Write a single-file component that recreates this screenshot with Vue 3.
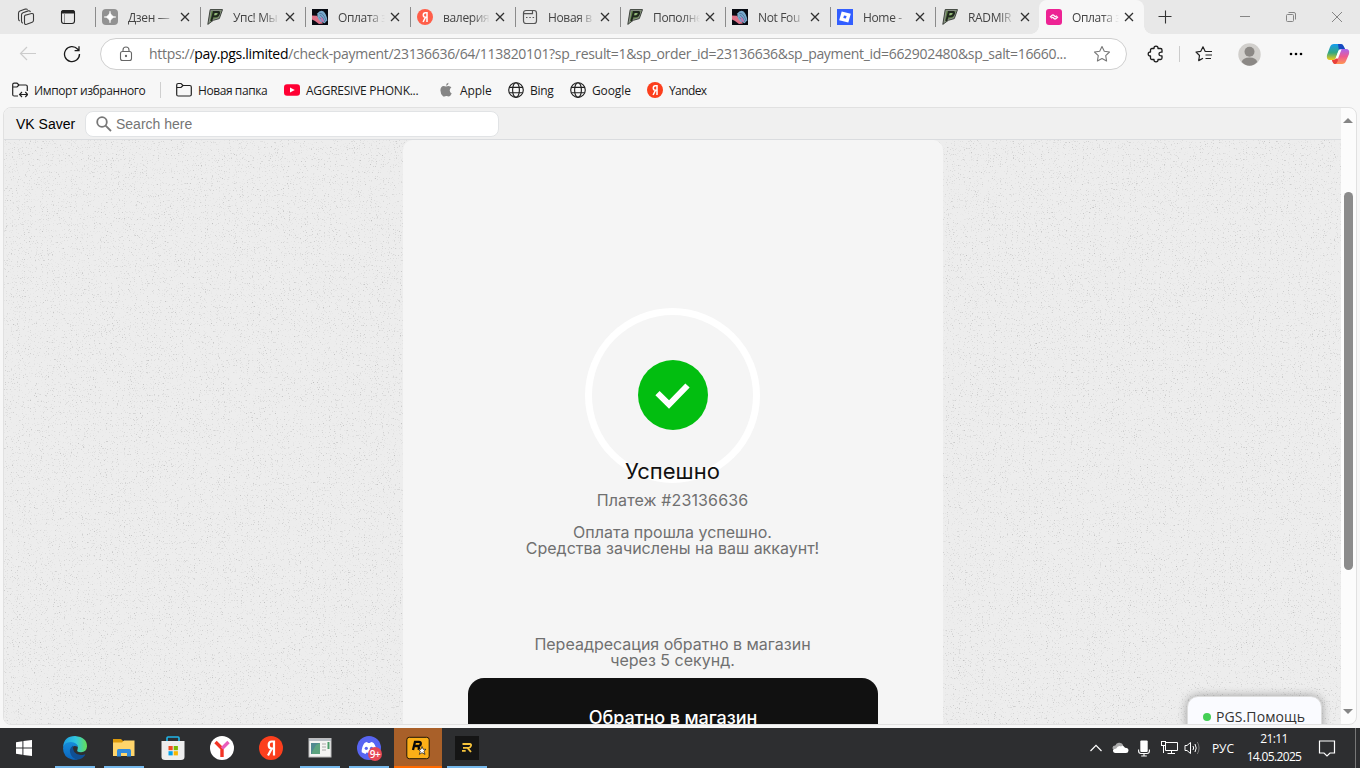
<template>
  <div class="screen">
    <header class="tab-strip">
      <div class="strip-tools">
        <svg class="workspaces" width="18" height="18" viewBox="0 0 18 18" fill="none" stroke="#3b3b3b" stroke-width="1.1">
          <path d="M8.2 7.2 14.5 5.5Q16.5 5.2 16.5 7V12.2Q16.5 13.7 15.2 14.2L9.7 16.3Q7.5 16.9 7.5 14.7V8.5Q7.5 7.5 8.5 7.1Z" />
          <path d="M5.8 15.2Q4.5 14.7 4.5 13V7Q4.5 5.4 6 4.8L11.2 2.9Q12.7 2.5 13.5 4M2.7 13Q1.5 12.3 1.5 10.7V5.2Q1.5 3.7 2.9 3.1L8.3 1.1Q9.8.7 10.6 1.6" />
        </svg>
        <svg width="16" height="16" viewBox="0 0 16 16" fill="none" stroke="#222" stroke-width="1.1">
          <rect x="1.5" y="1.5" width="13" height="13" rx="2.5" />
          <path d="M1.5 3.5Q1.5 1.5 3.5 1.5H12.5Q14.5 1.5 14.5 3.5V4H1.5Z" fill="#222" />
          <path d="M4.5 5V14" stroke="#777" stroke-width=".8" />
        </svg>
      </div>
      <div v-for="(tab, i) in tabs" :key="i" class="tab" :class="{ active: tab.active }">
        <svg class="favicon" width="16" height="16" viewBox="0 0 16 16">
          <g v-if="tab.icon === 'dzen'">
            <rect width="16" height="16" rx="4" fill="#929292" />
            <path d="M8 2Q8.4 7.6 14 8Q8.4 8.4 8 14Q7.6 8.4 2 8Q7.6 7.6 8 2Z" fill="#fff" stroke="#fff" stroke-width=".5" />
          </g>
          <g v-else-if="tab.icon === 'radmir'">
            <path d="M3.2.6H15.5L12.3 9.6 6.3 11.3.8 15.4Z" fill="#8f968c" stroke="#30362e" stroke-width=".9" />
            <path d="M4.5 2H13.8L11.3 8.5 5.9 10 2.8 13Z" fill="#5f8148" />
            <path d="M4.3 12 6.8 3H11.5Q12.5 3.3 11.9 4.8 11.2 7.2 8.9 7.4H6.3" fill="none" stroke="#20271f" stroke-width="1.9" />
            <path d="M7.9 4.3H10.2L9.5 5.8 7.4 6.1Z" fill="#a3c58a" />
          </g>
          <g v-else-if="tab.icon === 'shell'">
            <rect width="16" height="16" fill="#080b12" />
            <path d="M0 6.5 5 6.8Q7 10 11 14.5L7 15 3 12 0 10.5Z" fill="#dc7288" />
            <path d="M5.5 4.3Q8 .5 11.3 2.2 15 5.6 15.2 11.3L12.7 14.3 8.2 12.4Q4.5 8.2 5.5 4.3Z" fill="#79aacb" />
            <path d="M7.3 4.5Q11 3 14 11.5M8 6Q10.4 6.5 12.9 13M7.3 8.5Q9.2 9 10.8 13.3" fill="none" stroke="#3a5582" stroke-width=".6" />
            <path d="M8.3 8.5Q10.6 7.5 12.2 13L9.5 12.5Z" fill="#bd78b0" />
          </g>
          <g v-else-if="tab.icon === 'yandex'">
            <circle cx="8" cy="8" r="8" fill="#ff5e49" />
            <path d="M10 13V3.7H8.4Q6.3 3.7 6.3 6T8.4 8.3H10M8.4 8.3 6.1 13" fill="none" stroke="#fff" stroke-width="1.5" />
          </g>
          <g v-else-if="tab.icon === 'page'" fill="none" stroke="#555" stroke-width="1.2">
            <rect x="1.5" y="1.5" width="13" height="13" rx="2.5" />
            <path d="M1.5 4.7H10.5V1.5M4 8.5H5.5M7.3 8.5H8.8M10.6 8.5H12.1" />
          </g>
          <g v-else-if="tab.icon === 'roblox'">
            <rect width="16" height="16" fill="#335fff" />
            <path d="M4.7 2.4 13.8 4.8 11.3 13.6 2.2 11.3Z" fill="#fff" />
            <path d="M7 6.4 9.6 7.1 8.9 9.6 6.3 8.9Z" fill="#335fff" />
          </g>
          <g v-else>
            <rect width="16" height="16" rx="3" fill="#ed2394" />
            <path d="M4 8.2 6.2 6.2Q7 5.5 8 6.5L9 7.4Q9.5 7.8 10.2 7.2L10.8 6.7M12 7.8 9.8 9.8Q9 10.5 8 9.5L7 8.6Q6.5 8.2 5.8 8.8L5.2 9.3" fill="none" stroke="#fff" stroke-width="1.3" />
          </g>
        </svg>
        <span class="tab-title">{{ tab.title }}</span>
        <svg class="tab-close" width="10" height="10" viewBox="0 0 10 10"><path d="M1 1 9 9M9 1 1 9" stroke="#303030" stroke-width="1.3" /></svg>
      </div>
      <svg class="new-tab" width="14" height="14" viewBox="0 0 14 14"><path d="M7.5 .5V13.5M.5 6.5H13.5" stroke="#333" stroke-width="1.1" /></svg>
      <div class="window-buttons">
        <svg width="12" height="12" viewBox="0 0 12 12"><path d="M1 5.5H11" /></svg>
        <svg width="12" height="12" viewBox="0 0 12 12"><rect x="1.5" y="3.5" width="7" height="7" rx="1" /><path d="M3.5 1.5H9Q10.5 1.5 10.5 3V8.5" /></svg>
        <svg width="12" height="12" viewBox="0 0 12 12"><path d="M1 1 11 11M11 1 1 11" /></svg>
      </div>
    </header>

    <div class="toolbar">
      <svg class="back" width="18" height="16" viewBox="0 0 18 16" fill="none" stroke="#ccc" stroke-width="1.2"><path d="M17 7.5H1.5M8 1 1.5 7.5 8 14" /></svg>
      <svg class="reload" width="18" height="18" viewBox="0 0 18 18" fill="none" stroke="#1b1b1b" stroke-width="1.3">
        <path d="M16.5 9A7.5 7.5 0 1 1 14.5 4L16 5.5M16 1.2V5.6H11.6" />
      </svg>
      <div class="address">
        <svg class="lock" width="14" height="16" viewBox="0 0 14 16" fill="none" stroke="#666" stroke-width="1.1">
          <rect x="1.5" y="5.5" width="11" height="9" rx="2" /><path d="M4 5.5V4Q4 1 7 1T10 4V5.5" /><circle cx="7" cy="10" r=".6" fill="#555" />
        </svg>
        <span class="url">https://<b>pay.pgs.limited</b>/check-payment/23136636/64/113820101?sp_result=1&amp;sp_order_id=23136636&amp;sp_payment_id=662902480&amp;sp_salt=16660...</span>
        <svg class="star" width="18" height="18" viewBox="0 0 18 18" fill="none" stroke="#777" stroke-width="1.1"><path d="M9 1.5 11.3 6.3 16.5 7 12.7 10.7 13.6 16 9 13.5 4.4 16 5.3 10.7 1.5 7 6.7 6.3Z" stroke-linejoin="round" /></svg>
      </div>
      <svg class="puzzle" width="18" height="18" viewBox="0 0 18 18" fill="none" stroke="#1b1b1b" stroke-width="1.3">
        <path d="M5 3.5H7Q6.8 1.2 9 1.2T11 3.5H13.5Q15 3.5 15 5V7.2Q12 6.8 12 9T15 10.8V13Q15 14.5 13.5 14.5H11Q11.2 16.8 9 16.8T7 14.5H5Q3.5 14.5 3.5 13V11Q1.2 11.2 1.2 9T3.5 7V5Q3.5 3.5 5 3.5Z" stroke-linejoin="round" />
      </svg>
      <i class="divider"></i>
      <svg class="favorites" width="18" height="18" viewBox="0 0 18 18" fill="none" stroke="#222" stroke-width="1.2">
        <path d="M11 6.5 10.1 6.3 8 1.8 5.8 6.3 1 7 4.5 10.5 3.7 15.6 8 13.3M11 6.5H17M10.5 10H17M10.5 13.5H16" stroke-linejoin="round" />
      </svg>
      <svg class="avatar" width="23" height="23" viewBox="0 0 23 23"><circle cx="11.5" cy="11.5" r="11.2" fill="#d1cfcc" /><circle cx="11.5" cy="8.8" r="5" fill="#8b8885" /><path d="M3.7 19Q4.8 14.5 11.5 14.5T19.3 19Q16 22.7 11.5 22.7T3.7 19Z" fill="#8b8885" /></svg>
      <svg class="more" width="14" height="4" viewBox="0 0 14 4"><circle cx="2" cy="2" r="1.3" /><circle cx="7" cy="2" r="1.3" /><circle cx="12" cy="2" r="1.3" /></svg>
      <svg class="copilot" width="24" height="22" viewBox="0 0 24 22">
        <defs>
          <linearGradient id="cpLeft" x2="0" y2="1"><stop stop-color="#139cf0" /><stop offset=".55" stop-color="#35a780" /><stop offset="1" stop-color="#f5cd16" /></linearGradient>
          <linearGradient id="cpRight" x2="0" y2="1"><stop stop-color="#a866ee" /><stop offset=".5" stop-color="#ee5a91" /><stop offset="1" stop-color="#ff9652" /></linearGradient>
        </defs>
        <path d="M8 1H15Q17 1 18 4L19 6H16Q13 6 12 9L10 15Q9 17 7 17H4Q0 17 1 12L4 4Q5 1 8 1Z" fill="url(#cpLeft)" />
        <path d="M12 1H15Q17 1 18 4L19 6H16Q14 6 13 8Z" fill="#1848c0" />
        <path d="M16 6H20Q24 6 23 11L20 18Q19 21 16 21H9Q7 21 6 17H7Q10 17 11 14L13 9Q14 6 16 6Z" fill="url(#cpRight)" />
        <path d="M6 17H7Q10 17 11 14L12 17Q11 20.9 9 21 7 21 6 17Z" fill="#e93f3b" />
        <path d="M13 6.5H15.5L12 15.5H9.5Z" fill="#fff" />
      </svg>
    </div>

    <nav class="bookmarks">
      <a v-for="mark in bookmarks" :key="mark.text" class="bookmark" :class="mark.icon + ' ' + (mark.cls || '')">
        <svg width="16" height="16" viewBox="0 0 16 16">
          <g v-if="mark.icon === 'folder' || mark.icon === 'import'" fill="none" stroke="#222" stroke-width="1.2">
            <path v-if="mark.icon === 'folder'" d="M.7 3Q.7 1.5 2.2 1.5H5L7 3.5H13.8Q15.3 3.5 15.3 5V12.5Q15.3 14 13.8 14H2.2Q.7 14 .7 12.5ZM.7 5.5H5L7 3.5" />
            <path v-else d="M6 14H2.2Q.7 14 .7 12.5V2.7Q.7 1.2 2.2 1.2H5L7 3H13.8Q15.3 3 15.3 4.5V9M.7 5H5L7 3M8 12.5H15.3M10 10 7.6 12.5 10 15M13.3 10 15.7 12.5 13.3 15" />
          </g>
          <g v-else-if="mark.icon === 'youtube'"><rect y="2.2" width="16" height="11.6" rx="3" fill="#ff0033" /><path d="M6 5.5 10.8 8 6 10.5Z" fill="#fff" /></g>
          <g v-else-if="mark.icon === 'apple'" fill="#858585">
            <path d="M8 4.6Q9 3.9 10.5 3.9 12.5 4 13.4 5.6 11.6 6.8 11.7 8.6 11.8 10.5 13.7 11.4 12.2 14.6 10.6 14.6 9.7 14.5 8.8 14.1 8.1 13.9 7.2 14.2 6 14.8 5.2 14.4 2.4 12 2.4 8.2 2.6 4.2 5.7 4 6.8 4 8 4.6Z" /><path d="M8 3.7Q8 1.3 10.4.7 10.7 3 8 3.7Z" />
          </g>
          <g v-else-if="mark.icon === 'globe'" fill="none" stroke="#222" stroke-width="1.15"><circle cx="8" cy="8" r="7.3" /><ellipse cx="8" cy="8" rx="3.4" ry="7.3" /><path d="M1.3 5.3H14.7M1.3 10.7H14.7" /></g>
          <g v-else><circle cx="8" cy="8" r="8" fill="#fc3f1d" /><path d="M10 13V3.7H8.4Q6.3 3.7 6.3 6T8.4 8.3H10M8.4 8.3 6.1 13" fill="none" stroke="#fff" stroke-width="1.5" /></g>
        </svg>
        <span>{{ mark.text }}</span>
      </a>
    </nav>

    <main class="viewport">
      <div class="page">
        <div class="saver-bar">
          <span class="saver-name">VK Saver</span>
          <label class="saver-search">
            <svg width="16" height="16" viewBox="0 0 16 16" fill="none" stroke="#777" stroke-width="1.8"><circle cx="6" cy="6" r="4.8" /><path d="M9.6 9.6 15 15" /></svg>
            <span>Search here</span>
          </label>
        </div>
        <div class="payment-page">
          <svg class="grain" width="1337" height="585">
            <filter id="speckle" x="0" y="0" width="100%" height="100%" color-interpolation-filters="sRGB">
              <feTurbulence type="fractalNoise" baseFrequency="0.83" numOctaves="2" seed="8" />
              <feColorMatrix values="0 0 0 0 .5  0 0 0 0 .5  0 0 0 0 .5  1.5 0 0 0 -.93" />
            </filter>
            <rect width="1337" height="585" filter="url(#speckle)" />
          </svg>
          <section class="card">
            <div class="ring">
              <svg width="70" height="70" viewBox="0 0 70 70"><circle cx="35" cy="35" r="35" fill="#02be10" /><path d="M19.5 33.2 31 44.5 49.5 25.5" fill="none" stroke="#fff" stroke-width="6" /></svg>
            </div>
            <h1>Успешно</h1>
            <p class="order">Платеж #23136636</p>
            <p class="message">Оплата прошла успешно.<br>Средства зачислены на ваш аккаунт!</p>
            <p class="redirect">Переадресация обратно в магазин<br>через {{ seconds }} секунд.</p>
            <button class="return">Обратно в магазин</button>
          </section>
          <div class="help"><i></i><span>PGS.Помощь</span></div>
        </div>
      </div>
      <div class="scrollbar"><i class="arrow up"></i><i class="thumb"></i><i class="arrow down"></i></div>
    </main>

    <footer class="taskbar">
      <div v-for="app in apps" :key="app.icon" class="task" :class="[app.icon, { open: app.open }]">
        <svg width="24" height="24" viewBox="0 0 24 24">
          <path v-if="app.icon === 'start'" d="M4 6.2 10.4 5.2V11.4H4ZM11.4 5 20 4V11.4H11.4ZM4 12.4H10.4V18.8L4 17.8ZM11.4 12.4H20V20L11.4 18.9Z" fill="#fff" />
          <g v-else-if="app.icon === 'edge'">
            <defs>
              <linearGradient id="edgeTop"><stop stop-color="#1d9de2" /><stop offset=".55" stop-color="#32c7df" /><stop offset="1" stop-color="#66df54" /></linearGradient>
              <linearGradient id="edgeBase" x2="0" y2="1"><stop stop-color="#168ddb" /><stop offset="1" stop-color="#0b64bd" /></linearGradient>
            </defs>
            <path d="M0 11Q1 0 12 0 24 1 24 10.5 23.5 16 18 16.3 13 16 14.5 13.5 16 9 11 7.5 5 6 0 11Z" fill="url(#edgeTop)" />
            <path d="M0 12Q1 6 8 6 14 6.5 15 11 10 8 8 13 7 20 15 23.6 12 24 10 23.8 0 22 0 12Z" fill="url(#edgeBase)" />
            <path d="M10 9.5Q5 13 8 19 10.5 23.4 15 23.6 20 22.8 22.3 18.7 22.3 18.2 21.5 18.4 15 20.5 11.3 16 9.6 13 10 9.5Z" fill="#104f94" />
          </g>
          <g v-else-if="app.icon === 'explorer'"><path d="M1 3H9L11 5H20V9H1Z" fill="#dd9a0c" /><path d="M1 6.5H10L12 4.5H22.5V20H1Z" fill="#ffd56b" /><path d="M5 15Q5 13 6.5 13H17.5Q19 13 19 15V20.5H15V17H9V20.5H5Z" fill="#328bdc" /></g>
          <g v-else-if="app.icon === 'store'">
            <path d="M6 6V2Q6 1 7 1H17Q18 1 18 2V6" fill="none" stroke="#20b5e8" stroke-width="1.6" /><path d="M.5 5H23.5V21Q23.5 24 20 24H4Q.5 24 .5 21Z" fill="#eee" />
            <rect x="7.5" y="10" width="4.2" height="4.2" fill="#f04b24" /><rect x="12.7" y="10" width="4.2" height="4.2" fill="#7bb900" /><rect x="7.5" y="15.2" width="4.2" height="4.2" fill="#00a3ed" /><rect x="12.7" y="15.2" width="4.2" height="4.2" fill="#f8b600" />
          </g>
          <g v-else-if="app.icon === 'browser'"><circle cx="12" cy="12" r="12" fill="#fff" /><path d="M5.5 6 12 12.5V21" fill="none" stroke="#f33425" stroke-width="3.4" /><path d="M12 12.5 18.5 6" stroke="#e95dbb" stroke-width="3.4" /></g>
          <g v-else-if="app.icon === 'yandex'"><circle cx="12" cy="12" r="12" fill="#fc3f1d" /><path d="M15 19.5V5.5H12.8Q9.7 5.5 9.7 9T12.8 12.5H15M12.8 12.5 9 19.5" fill="none" stroke="#fff" stroke-width="2.2" /></g>
          <g v-else-if="app.icon === 'program'"><rect x="1" y="2.5" width="22" height="18.5" fill="#f4f4f3" stroke="#bdbdbd" /><path d="M1 4H23" stroke="#b8bec4" stroke-width="2" /><rect x="3" y="7" width="9" height="11" fill="#508a91" /><path d="M4 16 8 9 12 7V18H4Z" fill="#5ca480" /><path d="M14 8H18M14 11H18M14 14H18" stroke="#aaa" /><path d="M20.5 6V13" stroke="#4b9d6a" stroke-width="2" /></g>
          <g v-else-if="app.icon === 'discord'">
            <circle cx="12" cy="12" r="12" fill="#5865f2" /><path d="M7.5 7Q9 6.2 10.2 6L10.8 7Q12 6.8 13.2 7L13.8 6Q15.3 6.2 16.6 7 19.5 10.7 19.4 16.2L15.5 18 14.5 16.4Q12 17 9.5 16.4L8.5 18 4.7 16.2Q4.6 10.7 7.5 7Z" fill="#fff" /><circle cx="9.3" cy="12.3" r="1.6" fill="#5865f2" /><circle cx="14.5" cy="12.3" r="1.6" fill="#5865f2" />
          </g>
          <g v-else-if="app.icon === 'rockstar'"><rect x=".8" y="1.3" width="22.4" height="21.4" rx="2.5" fill="#fcaf17" stroke="#211606" stroke-width="1" /><path d="M7 14 9 5.8H12.8Q15.3 6 14.7 8.2 14.2 10 11.8 10H8.2M11.3 10Q13.2 10.2 12.8 12L12.8 14" fill="none" stroke="#090909" stroke-width="2.3" /><path d="M16 10.5 17.2 13.3H20L17.9 15.2 19 18.4 16 16.7 13.3 18.4 14.3 15.2 12.2 13.3H15Z" fill="#fff" stroke="#111" stroke-width=".7" /></g>
          <g v-else><rect width="24" height="24" fill="#151515" /><path d="M7.5 8H14.8Q16.5 8 16 9.8T13.8 11.8H8M12.5 11.8 16 16M10.7 14.8H7" fill="none" stroke="#f6c33b" stroke-width="1.8" /></g>
        </svg>
        <span v-if="app.icon === 'discord'" class="badge">9+</span>
      </div>
      <div class="tray">
        <svg class="chevron" width="14" height="10" viewBox="0 0 14 10"><path d="M1.5 8 7 2.3 12.5 8" fill="none" stroke="#fff" stroke-width="1.2" /></svg>
        <svg class="cloud" width="17" height="14" viewBox="0 0 17 14"><path d="M3.5 9Q.5 9 .5 6.7.7 4.4 3.3 4.5 4.5 1.3 7.5 1.8 10.3 1.7 11.3 4.5L8 8.8Z" fill="#aaa" /><path d="M3.5 12Q.8 11.7 1 9.3 1.5 7.4 4 7.7 6 4.2 9 5.4 11 3.8 13 6.7 16.7 6.8 16.5 9.7 16.3 12 14 12Z" fill="#fff" /></svg>
        <svg class="mic" width="12" height="17" viewBox="0 0 12 17"><rect x="2.3" y=".5" width="7.4" height="11.5" rx="1" fill="#fff" /><path d="M.6 9.5V11Q.6 13.5 3 13.5H9Q11.4 13.5 11.4 11V9.5M6 13.5V16M3.2 16H8.8" fill="none" stroke="#fff" stroke-width="1.1" /></svg>
        <svg class="network" width="17" height="14" viewBox="0 0 17 14" fill="none" stroke="#fff"><path d="M5 1.5H16.5V9.5H4.5V4.5M10.5 9.5V12.5M6.5 12.5H14M2.5 5V12" /><rect x=".5" y=".5" width="4" height="4" /></svg>
        <svg class="volume" width="18" height="16" viewBox="0 0 18 16" fill="none" stroke="#fff"><path d="M1 5.5H3L6.5 2.5V13.5L3 10.5H1ZM9 6Q10.3 8 9 10M11 4Q13.4 8 11 12" /><path d="M13.3 2Q16.8 8 13.3 14" stroke="#777" /></svg>
        <span class="lang">РУС</span>
        <div class="clock"><span>21:11</span><span>14.05.2025</span></div>
        <svg class="notice" width="18" height="18" viewBox="0 0 18 18"><path d="M1.5 2H16.5V14H12L9 17 6 14H1.5Z" fill="none" stroke="#fff" stroke-width="1.2" /></svg>
        <i class="show-desktop"></i>
      </div>
    </footer>
  </div>
</template>

<script setup>
import { ref } from 'vue'

const tabs = [
  { icon: 'dzen', title: 'Дзен —' },
  { icon: 'radmir', title: 'Упс! Мы' },
  { icon: 'shell', title: 'Оплата з' },
  { icon: 'yandex', title: 'валерия' },
  { icon: 'page', title: 'Новая в' },
  { icon: 'radmir', title: 'Пополне' },
  { icon: 'shell', title: 'Not Fou' },
  { icon: 'roblox', title: 'Home -' },
  { icon: 'radmir', title: 'RADMIR' },
  { icon: 'pgs', title: 'Оплата з', active: true }
]

const bookmarks = [
  { icon: 'import', text: 'Импорт избранного' },
  { icon: 'folder', text: 'Новая папка' },
  { icon: 'youtube', text: 'AGGRESIVE PHONK...' },
  { icon: 'apple', text: 'Apple' },
  { icon: 'globe', text: 'Bing', cls: 'bing' },
  { icon: 'globe', text: 'Google', cls: 'google' },
  { icon: 'yandex', text: 'Yandex' }
]

const apps = [
  { icon: 'start' },
  { icon: 'edge', open: true },
  { icon: 'explorer', open: true },
  { icon: 'store' },
  { icon: 'browser' },
  { icon: 'yandex' },
  { icon: 'program', open: true },
  { icon: 'discord', open: true },
  { icon: 'rockstar', open: true },
  { icon: 'radmir', open: true }
]

const seconds = ref(5)
</script>

<style>
body {
  margin: 0;
  overflow: hidden;
}
</style>

<style scoped>
* {
  box-sizing: border-box;
}

svg {
  display: block;
  flex: none;
}

.screen {
  width: 1360px;
  height: 768px;
  display: flex;
  flex-direction: column;
  background: #f7f7f7;
  font-family: "Open Sans", "Noto Sans", sans-serif;
  font-size: 12px;
  color: #1b1b1b;
  overflow: hidden;
}

.tab-strip {
  height: 34px;
  flex: none;
  display: flex;
  background: #e8e8e8;
}

.strip-tools {
  width: 95px;
  display: flex;
  align-items: center;
  gap: 25px;
  padding-left: 17px;
}

.tab {
  width: 105px;
  height: 34px;
  display: flex;
  align-items: center;
  padding-left: 7px;
  color: #444;
  background: linear-gradient(#8b8b8b, #8b8b8b) 0 7px / 1px 20px no-repeat;
}

.tab.active {
  position: relative;
  width: 105px;
  margin-left: -1px;
  background: #f7f7f7;
  border-radius: 8px 8px 0 0;
}

.tab.active::before,
.tab.active::after {
  content: "";
  position: absolute;
  bottom: 0;
  width: 8px;
  height: 8px;
}

.tab.active::before {
  left: -8px;
  background: radial-gradient(circle at 0 0, #e8e8e8 7.5px, #f7f7f7 8px);
}

.tab.active::after {
  right: -8px;
  background: radial-gradient(circle at 100% 0, #e8e8e8 7.5px, #f7f7f7 8px);
}

.tab-title {
  width: 47px;
  margin-left: 10px;
  letter-spacing: -0.35px;
  white-space: nowrap;
  mask-image: linear-gradient(90deg, #000 30px, transparent 47px);
}

.tab-close {
  margin-left: 5px;
}

.new-tab {
  margin: 10px 0 0 14px;
}

.window-buttons {
  margin-left: auto;
  display: flex;
  align-items: center;
  gap: 34px;
  padding-right: 17px;
}

.window-buttons svg {
  fill: none;
  stroke: #858585;
}

.toolbar {
  height: 40px;
  flex: none;
  display: flex;
  align-items: center;
  padding-left: 19px;
}

.reload {
  margin-left: 26px;
}

.address {
  width: 1027px;
  height: 32px;
  margin-left: 19px;
  display: flex;
  align-items: center;
  border: 1px solid #cfcfcf;
  border-radius: 16px;
  background: #fff;
}

.lock {
  margin-left: 18px;
}

.url {
  width: 920px;
  margin-left: 16px;
  padding-bottom: 1px;
  font-size: 14px;
  letter-spacing: -0.31px;
  white-space: nowrap;
  color: #737373;
}

.url b {
  font-weight: 400;
  color: #000;
}

.star {
  margin-left: 24px;
}

.puzzle {
  margin-left: 20px;
}

.divider {
  width: 1px;
  height: 16px;
  margin-left: 14px;
  background: #ccc;
}

.favorites {
  margin-left: 15px;
}

.avatar {
  margin-left: 25px;
}

.more {
  margin-left: 28px;
}

.copilot {
  margin-left: 23px;
}

.bookmarks {
  height: 33px;
  flex: none;
  display: flex;
  align-items: center;
  padding: 0 0 1px 12px;
}

.bookmark {
  display: flex;
  align-items: center;
  gap: 6px;
  white-space: nowrap;
}

.bookmark.import {
  width: 149px;
  height: 16px;
  margin-right: 15px;
  border-right: 1px solid #cfcfcf;
  letter-spacing: -0.39px;
}

.bookmark.folder {
  width: 108px;
  letter-spacing: -0.42px;
}

.bookmark.youtube {
  width: 154px;
  letter-spacing: -0.27px;
}

.bookmark.apple {
  width: 70px;
  letter-spacing: -0.1px;
}

.bookmark.bing {
  width: 62px;
  letter-spacing: -0.3px;
}

.bookmark.google {
  width: 77px;
  letter-spacing: -0.1px;
}

.bookmark.yandex {
  letter-spacing: -0.6px;
}

.viewport {
  width: 1354px;
  height: 618px;
  flex: none;
  margin-left: 3px;
  display: flex;
  border: 1px solid #e1e1e1;
  border-radius: 8px;
  background: #fcfcfc;
  overflow: hidden;
}

.page {
  width: 1337px;
}

.saver-bar {
  height: 32px;
  display: flex;
  align-items: center;
  padding-left: 12px;
  border-bottom: 1px solid #dadcdf;
  background: #f0f0f0;
  font-family: "Liberation Sans", Arial, sans-serif;
  font-size: 14px;
}

.saver-name {
  width: 69px;
  color: #000;
}

.saver-search {
  width: 414px;
  height: 26px;
  display: flex;
  align-items: center;
  gap: 4px;
  padding-left: 10px;
  border: 1px solid #e1e3e5;
  border-radius: 8px;
  background: #fff;
  color: #757575;
}

.payment-page {
  position: relative;
  height: 585px;
  display: flex;
  justify-content: center;
  overflow: hidden;
  background: #ededed;
}

.grain {
  position: absolute;
  inset: 0;
}

.card {
  position: relative;
  width: 540px;
  height: 700px;
  margin-left: 1px;
  padding: 168px 1px 0 0;
  display: flex;
  flex-direction: column;
  align-items: center;
  background: #f5f5f5;
  border-radius: 10px 10px 0 0;
  font-family: Inter, sans-serif;
  text-align: center;
}

.ring {
  width: 175px;
  height: 175px;
  flex: none;
  display: flex;
  justify-content: center;
  padding: 45px 0 0 1px;
  border: 7px solid #fff;
  border-radius: 50%;
}

.card h1 {
  position: relative;
  margin: -25px 0 0;
  font-size: 22px;
  line-height: 26px;
  font-weight: 400;
  color: #111;
}

.card p {
  margin: 0;
  font-size: 16px;
  line-height: 16px;
  color: #707070;
}

.card .order {
  margin-top: 8px;
  letter-spacing: 0.13px;
}

.card .message {
  margin-top: 16px;
}

.card .redirect {
  margin-top: 80px;
}

.return {
  width: 410px;
  height: 80px;
  flex: none;
  margin: 10px 0 0 1px;
  border: 0;
  border-radius: 16px;
  background: #111;
  color: #fff;
  font: 500 18px/20px Inter, sans-serif;
  letter-spacing: -0.08px;
}

.help {
  position: absolute;
  right: 19px;
  bottom: -14px;
  width: 135px;
  height: 43px;
  display: flex;
  align-items: center;
  padding: 0 0 2px 15px;
  gap: 5px;
  border: 1px solid #ddd;
  border-radius: 11px;
  background: #fafbff;
  box-shadow: 0 0 10px rgba(0, 0, 0, 0.35);
  font-size: 14px;
  letter-spacing: 0.1px;
  color: #333;
  white-space: nowrap;
}

.help i {
  width: 8px;
  height: 8px;
  margin-top: 1px;
  border-radius: 50%;
  background: #43cf54;
}

.scrollbar {
  width: 15px;
  display: flex;
  flex-direction: column;
  align-items: center;
  padding: 10px 1px 0 0;
}

.arrow {
  border: 5px solid transparent;
}

.arrow.up {
  border-top: 0;
  border-bottom-color: #858585;
}

.thumb {
  width: 9px;
  height: 378px;
  margin-top: 69px;
  border-radius: 5px;
  background: #8b8b8b;
}

.arrow.down {
  margin-top: 139px;
  border-bottom: 0;
  border-top-color: #858585;
}

.taskbar {
  height: 40px;
  flex: none;
  margin-top: 3px;
  display: flex;
  background: #2d2e30;
}

.task {
  position: relative;
  width: 48px;
  height: 40px;
  margin-right: 1px;
  display: flex;
  align-items: center;
  justify-content: center;
}

.task.start {
  margin-right: 3px;
}

.task.open::after {
  content: "";
  position: absolute;
  left: 4px;
  right: 4px;
  bottom: 0;
  height: 2px;
  background: #76b9ed;
}

.task.rockstar {
  background: #a96029;
}

.task.rockstar::after {
  left: 0;
  right: 0;
  background: #ff6a00;
}

.badge {
  position: absolute;
  left: 23px;
  top: 19px;
  width: 14px;
  height: 14px;
  border-radius: 50%;
  background: #e74856;
  color: #fff;
  font-size: 10px;
  font-weight: 600;
  letter-spacing: -0.5px;
  line-height: 14px;
  text-align: center;
}

.tray {
  margin-left: auto;
  display: flex;
  align-items: center;
  color: #fff;
}

.cloud {
  margin-left: 9px;
}

.mic {
  margin-left: 9px;
}

.network {
  margin-left: 11px;
}

.volume {
  margin-left: 6px;
}

.lang {
  width: 34px;
  margin-left: 10px;
  letter-spacing: -0.1px;
}

.clock {
  width: 56px;
  display: flex;
  flex-direction: column;
  align-items: center;
  line-height: 18px;
  letter-spacing: -0.65px;
}

.notice {
  margin-left: 16px;
}

.show-desktop {
  width: 5px;
  height: 40px;
  margin-left: 19px;
  border-left: 1px solid #777;
}
</style>
